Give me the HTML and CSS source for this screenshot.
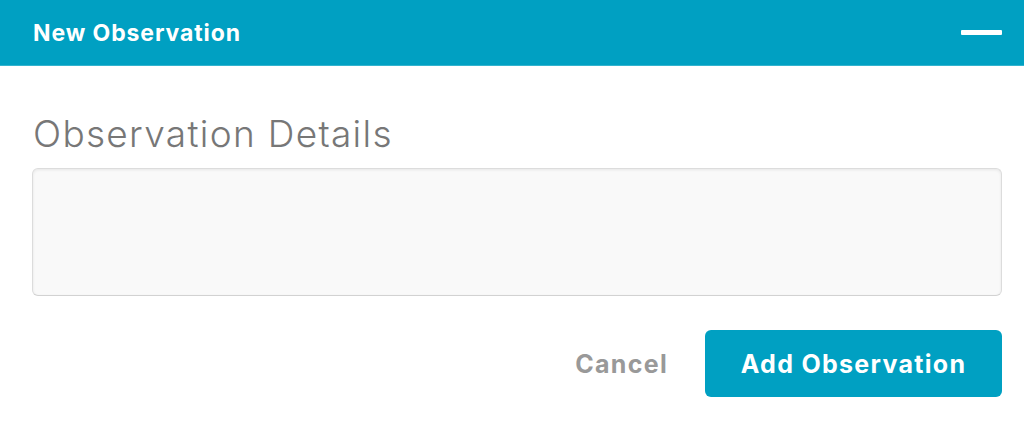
FILE: index.html
```html
<!DOCTYPE html>
<html lang="en">
  <head>
    <meta charset="UTF-8" />
    <title>New Observation</title>
    <link rel="stylesheet" href="styles.css">
  </head>
  <body>
    <div class="panel">
      <!-- header -->
      <div class="panel-header">
        <span class="panel-title">New Observation</span>
        <span class="minimize"></span>
      </div>

      <div class="panel-body">
        <label class="field-label" for="details">Observation Details</label>
        <textarea id="details" class="field-input"></textarea>

        <div class="actions">
          <button class="btn-cancel">Cancel</button>
          <button class="btn-primary">Add Observation</button>
        </div>
      </div>
    </div>
  </body>
</html>
```

FILE: styles.css
```css
body {
  margin: 0;
  font-family: 'Inter', 'Open Sans', sans-serif;
  background: #fff;
}

.panel-header {
  display: flex;
  justify-content: space-between;
  align-items: center;
  height: 66px;
  padding: 0 22px 0 33px;
  background-color: #00a0c2;
  border-bottom: 1px solid #33b3ce;
  box-sizing: border-box;
}

.panel-title {
  color: #fff;
  font-size: 23px;
  font-weight: 700;
  letter-spacing: 0.9px;
}

.minimize {
  display: block;
  width: 41px;
  height: 5px;
  background: #fff;
  border-radius: 1px;
}

.panel-body {
  padding: 46px 22px 0 32px;
}

.field-label {
  display: block;
  color: #777;
  font-size: 37px;
  font-weight: 300;
  letter-spacing: 1.3px;
  line-height: 44px;
  margin-left: 1px;
  margin-bottom: 12px;
}

/* textarea */
.field-input {
  display: block;
  width: 100%;
  height: 128px;
  box-sizing: border-box;
  background: #f9f9f9;
  border: 1px solid #dcdcdc;
  border-bottom-color: #d2d2d2;
  border-radius: 6px;
  box-shadow: inset 0 1px 3px rgba(0, 0, 0, 0.08);
  resize: none;
  outline: none;
}

.actions {
  display: flex;
  justify-content: flex-end;
  align-items: center;
  margin-top: 34px;
}

.actions button {
  font-family: inherit;
  font-size: 25px;
  font-weight: 700;
  letter-spacing: 1.3px;
  border: none;
  cursor: pointer;
}

.btn-cancel {
  background: none;
  color: #999;
  padding: 0;
  margin-right: 37px;
}

.btn-primary {
  background-color: #00a0c2;
  color: #fff;
  height: 67px;
  width: 297px;
  border-radius: 6px;
}
```
